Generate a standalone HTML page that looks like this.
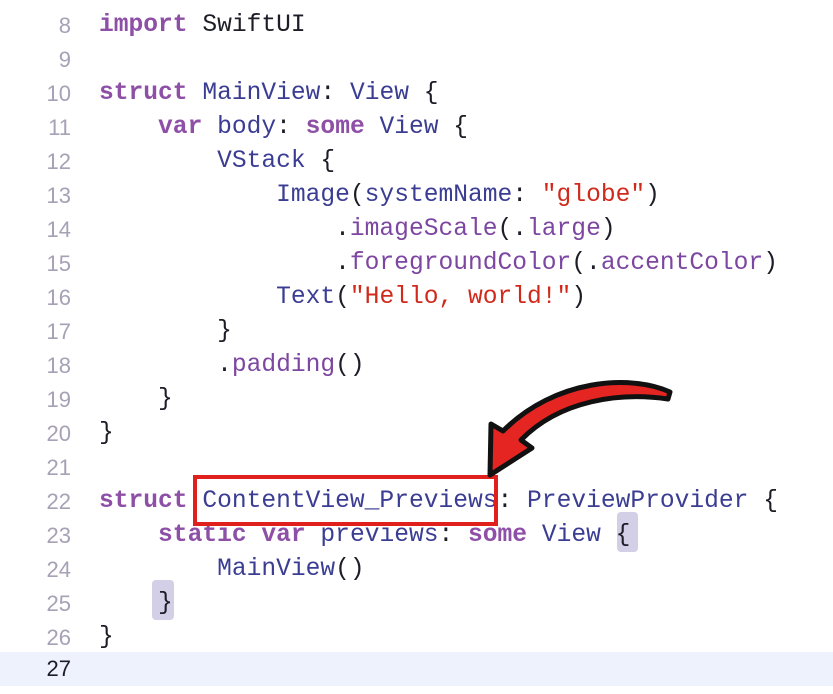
<!DOCTYPE html>
<html><head><meta charset="utf-8"><style>
html,body{margin:0;padding:0;background:#fff;width:833px;height:694px;overflow:hidden;position:relative}
.l{position:absolute;left:0;height:34px;line-height:34px;font-family:"Liberation Mono",monospace;font-size:24.6px;white-space:pre;color:#1d1d28}
.n{position:absolute;left:0;width:71px;text-align:right;color:#a7a1b6;font-size:22px;font-family:"Liberation Sans",sans-serif}
.c{position:absolute;left:99px}
.k{color:#8e4fa6;font-weight:bold}
.t{color:#3b3d93}
.s{color:#d12a1c}
.p{color:#7d46a0}
</style></head><body>
<div style="position:absolute;left:0;top:652px;width:833px;height:34px;background:#eef2fd"></div>
<div style="position:absolute;left:617px;top:512px;width:21px;height:40px;background:#d2cfe6;border-radius:4px"></div>
<div style="position:absolute;left:152px;top:580px;width:22px;height:40px;background:#d2cfe6;border-radius:4px"></div>
<div class="l" style="top:9px"><span class="n">8</span><span class="c"><span class="k">import</span> SwiftUI</span></div>
<div class="l" style="top:43px"><span class="n">9</span></div>
<div class="l" style="top:77px"><span class="n">10</span><span class="c"><span class="k">struct</span> <span class="t">MainView</span>: <span class="t">View</span> {</span></div>
<div class="l" style="top:111px"><span class="n">11</span><span class="c">    <span class="k">var</span> <span class="t">body</span>: <span class="k">some</span> <span class="t">View</span> {</span></div>
<div class="l" style="top:145px"><span class="n">12</span><span class="c">        <span class="t">VStack</span> {</span></div>
<div class="l" style="top:179px"><span class="n">13</span><span class="c">            <span class="t">Image</span>(<span class="t">systemName</span>: <span class="s">"globe"</span>)</span></div>
<div class="l" style="top:213px"><span class="n">14</span><span class="c">                .<span class="p">imageScale</span>(.<span class="p">large</span>)</span></div>
<div class="l" style="top:247px"><span class="n">15</span><span class="c">                .<span class="p">foregroundColor</span>(.<span class="p">accentColor</span>)</span></div>
<div class="l" style="top:281px"><span class="n">16</span><span class="c">            <span class="t">Text</span>(<span class="s">"Hello, world!"</span>)</span></div>
<div class="l" style="top:315px"><span class="n">17</span><span class="c">        }</span></div>
<div class="l" style="top:349px"><span class="n">18</span><span class="c">        .<span class="p">padding</span>()</span></div>
<div class="l" style="top:383px"><span class="n">19</span><span class="c">    }</span></div>
<div class="l" style="top:417px"><span class="n">20</span><span class="c">}</span></div>
<div class="l" style="top:451px"><span class="n">21</span></div>
<div class="l" style="top:485px"><span class="n">22</span><span class="c"><span class="k">struct</span> <span class="t">ContentView_Previews</span>: <span class="t">PreviewProvider</span> {</span></div>
<div class="l" style="top:519px"><span class="n">23</span><span class="c">    <span class="k">static</span> <span class="k">var</span> <span class="t">previews</span>: <span class="k">some</span> <span class="t">View</span> {</span></div>
<div class="l" style="top:553px"><span class="n">24</span><span class="c">        <span class="t">MainView</span>()</span></div>
<div class="l" style="top:587px"><span class="n">25</span><span class="c">    }</span></div>
<div class="l" style="top:621px"><span class="n">26</span><span class="c">}</span></div>
<div class="l" style="top:652px"><span class="n" style="color:#1d1d28">27</span></div>
<div style="position:absolute;left:193px;top:475px;width:297px;height:43px;border:4px solid #e0201c"></div>
<svg style="position:absolute;left:0;top:0" width="833" height="694">
<path d="M670,392 C630,374 555,379 503,431 L491,424 L490,475 L532,448 L521,440 C560,400 620,392 668,399 Z" fill="#e52521" stroke="#111" stroke-width="5" stroke-linejoin="round"/>
</svg>
</body></html>
